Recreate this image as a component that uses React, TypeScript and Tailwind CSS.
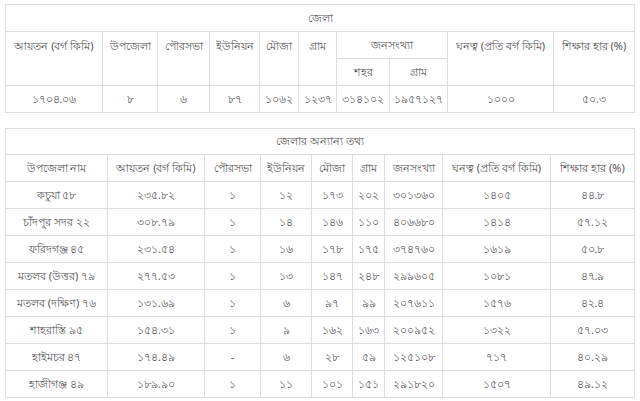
const district = {
  area: '১৭০৪.০৬',
  upazila: '৮',
  pourashava: '৬',
  union: '৮৭',
  mouza: '১০৬২',
  village: '১২৩৭',
  urban: '৩১৪১০২',
  rural: '১৯৫৭১২৭',
  density: '১০০০',
  literacy: '৫০.৩',
};

const rows = [
  ['কচুয়া ৫৮', '২৩৫.৮২', '১', '১২', '১৭৩', '২০২', '৩০১৩৬০', '১৪০৫', '৪৪.৮'],
  ['চাঁদপুর সদর ২২', '৩০৮.৭৯', '১', '১৪', '১৪৬', '১১০', '৪০৬৬৮০', '১৪১৪', '৫৭.১২'],
  ['ফরিদগঞ্জ ৪৫', '২৩১.৫৪', '১', '১৬', '১৭৮', '১৭৫', '৩৭৪৭৬০', '১৬১৯', '৫০.৮'],
  ['মতলব (উত্তর) ৭৯', '২৭৭.৫৩', '১', '১৩', '১৪৭', '২৪৮', '২৯৯৬০৫', '১০৮১', '৪৭.৯'],
  ['মতলব (দক্ষিণ) ৭৬', '১৩১.৬৯', '১', '৬', '৯৭', '৯৯', '২০৭৬১১', '১৫৭৬', '৪২.৪'],
  ['শাহরাস্তি ৯৫', '১৫৪.৩১', '১', '৯', '১৬২', '১৬৩', '২০০৯৫২', '১৩২২', '৫৭.০৩'],
  ['হাইমচর ৪৭', '১৭৪.৪৯', '-', '৬', '২৮', '৫৯', '১২৫১০৮', '৭১৭', '৪০.২৯'],
  ['হাজীগঞ্জ ৪৯', '১৮৯.৯০', '১', '১১', '১০১', '১৫১', '২৯১৮২০', '১৫০৭', '৪৯.১২'],
];

const cell = 'border border-[#dddddd] text-center align-middle font-normal p-0';

export default function App() {
  return (
    <div className="w-[640px] h-[401px] bg-white pt-1 pl-[5px] text-[11px] text-[#555555] font-['Noto_Sans','Liberation_Sans',sans-serif]">
      {/* district summary */}
      <table className="w-[629px] table-fixed border-collapse">
        <colgroup>
          <col className="w-[97px]" />
          <col className="w-[55px]" />
          <col className="w-[52px]" />
          <col className="w-[50px]" />
          <col className="w-[39px]" />
          <col className="w-[38px]" />
          <col className="w-[53px]" />
          <col className="w-[58px]" />
          <col className="w-[106px]" />
          <col className="w-[81px]" />
        </colgroup>
        <tbody>
          <tr className="h-[27px]">
            <td colSpan={10} className={cell}>জেলা</td>
          </tr>
          <tr className="h-[27px]">
            <th rowSpan={2} className={`${cell} !align-top pt-[6px]`}>আয়তন (বর্গ কিমি)</th>
            <th rowSpan={2} className={`${cell} !align-top pt-[6px]`}>উপজেলা</th>
            <th rowSpan={2} className={`${cell} !align-top pt-[6px]`}>পৌরসভা</th>
            <th rowSpan={2} className={`${cell} !align-top pt-[6px]`}>ইউনিয়ন</th>
            <th rowSpan={2} className={`${cell} !align-top pt-[6px]`}>মৌজা</th>
            <th rowSpan={2} className={`${cell} !align-top pt-[6px]`}>গ্রাম</th>
            <th colSpan={2} className={cell}>জনসংখ্যা</th>
            <th rowSpan={2} className={`${cell} !align-top pt-[6px]`}>ঘনত্ব (প্রতি বর্গ কিমি)</th>
            <th rowSpan={2} className={`${cell} !align-top pt-[6px]`}>শিক্ষার হার (%)</th>
          </tr>
          <tr className="h-[27px]">
            <th className={cell}>শহর</th>
            <th className={cell}>গ্রাম</th>
          </tr>
          <tr className="h-[27px]">
            <td className={cell}>{district.area}</td>
            <td className={cell}>{district.upazila}</td>
            <td className={cell}>{district.pourashava}</td>
            <td className={cell}>{district.union}</td>
            <td className={cell}>{district.mouza}</td>
            <td className={cell}>{district.village}</td>
            <td className={cell}>{district.urban}</td>
            <td className={cell}>{district.rural}</td>
            <td className={cell}>{district.density}</td>
            <td className={cell}>{district.literacy}</td>
          </tr>
        </tbody>
      </table>

      {/* upazila details */}
      <table className="mt-[15px] w-[629px] table-fixed border-collapse">
        <colgroup>
          <col className="w-[102px]" />
          <col className="w-[97px]" />
          <col className="w-[56px]" />
          <col className="w-[51px]" />
          <col className="w-[41px]" />
          <col className="w-[32px]" />
          <col className="w-[58px]" />
          <col className="w-[108px]" />
          <col className="w-[84px]" />
        </colgroup>
        <tbody>
          <tr className="h-[26px]">
            <td colSpan={9} className={cell}>জেলার অন্যান্য তথ্য</td>
          </tr>
          <tr className="h-[27px]">
            <th className={cell}>উপজেলা নাম</th>
            <th className={cell}>আয়তন (বর্গ কিমি)</th>
            <th className={cell}>পৌরসভা</th>
            <th className={cell}>ইউনিয়ন</th>
            <th className={cell}>মৌজা</th>
            <th className={cell}>গ্রাম</th>
            <th className={cell}>জনসংখ্যা</th>
            <th className={cell}>ঘনত্ব (প্রতি বর্গ কিমি)</th>
            <th className={cell}>শিক্ষার হার (%)</th>
          </tr>
          {rows.map((r) => (
            <tr key={r[0]} className="h-[27px]">
              {r.map((v, i) => (
                <td key={i} className={cell}>{v}</td>
              ))}
            </tr>
          ))}
        </tbody>
      </table>
    </div>
  );
}
